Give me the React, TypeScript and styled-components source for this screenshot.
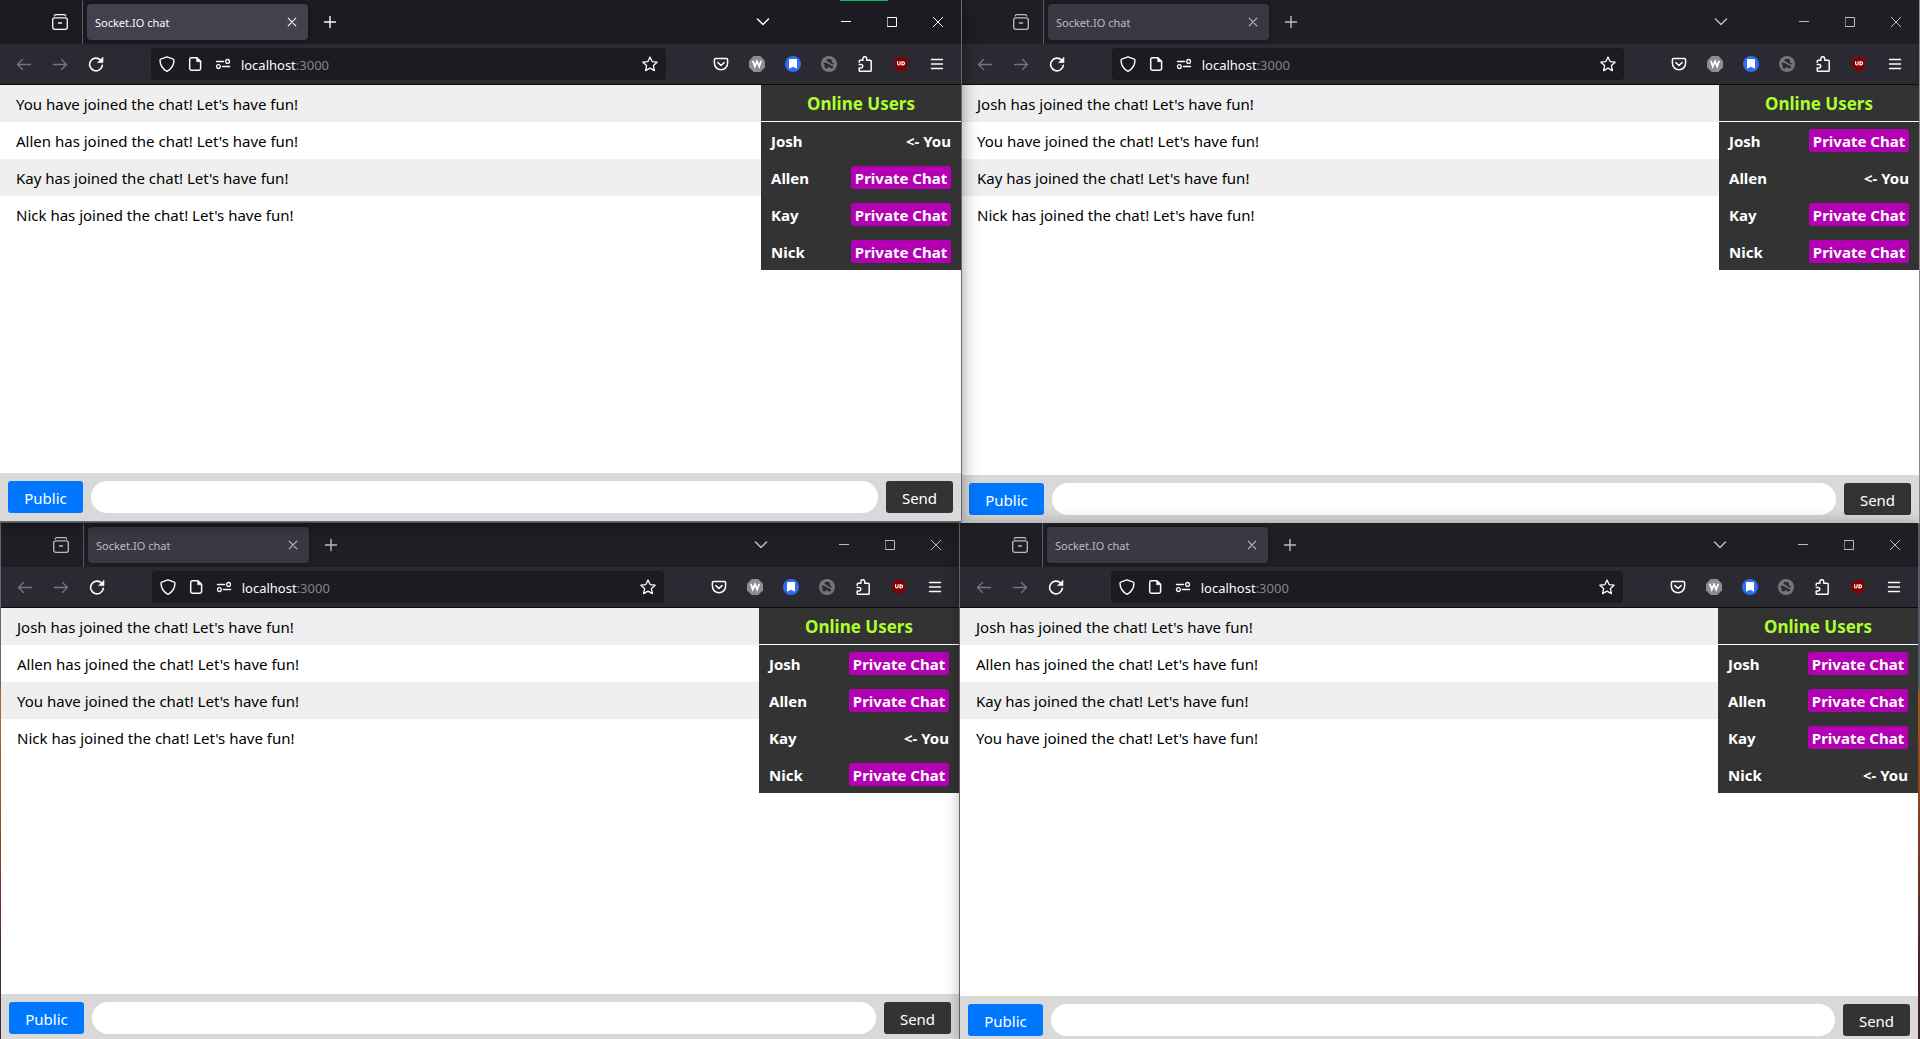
import React from "react";
import styled, { createGlobalStyle, css } from "styled-components";

const GlobalStyle = createGlobalStyle`
  *, *::before, *::after { box-sizing: border-box; }
  body { margin: 0; overflow: hidden; }
  button, input { font: inherit; color: inherit; border: 0; padding: 0; margin: 0; background: none; outline: none; }
  ul { list-style: none; margin: 0; padding: 0; }
  h2 { margin: 0; }
`;

type Slot = "topLeft" | "topRight" | "bottomLeft" | "bottomRight";

const Desktop = styled.main`
  position: relative;
  display: grid;
  grid-template-columns: 1fr 1fr;
  grid-template-rows: 523px 1fr;
  height: 100vh;
  overflow: hidden;
  background: linear-gradient(#5b6b7a 0, #5b6b7a 66%, #b8691c 67%, #a34a24 78%, #4a2a3c 92%, #44283a 100%);
  font-family: "Noto Sans", "Open Sans", sans-serif;
`;

const slots = {
  topLeft: css`
    margin: 0 -1px 2px 0;
    z-index: 4;
    box-shadow: 0 0 0 1px #6b6b6b, 0 2px 16px rgba(0, 0, 0, 0.45);
  `,
  topRight: css`
    margin: 0 1px 0 1px;
    z-index: 1;
    box-shadow: 0 0 0 1px #8a8a8a;
  `,
  bottomLeft: css`
    margin: 0 1px -3px 1px;
    z-index: 2;
    box-shadow: 0 -1px 0 0 #5b6b7a;
  `,
  bottomRight: css`
    margin: 0 2px -5px 0;
    z-index: 3;
    box-shadow: -1px 0 0 0 #6b6260, 0 0 14px rgba(0, 0, 0, 0.3);
  `,
};

const Window = styled.section<{ $slot: Slot }>`
  display: flex;
  flex-direction: column;
  min-width: 0;
  background: #fff;
  ${(p) => slots[p.$slot]}
`;

const TabStrip = styled.header<{ $active: boolean }>`
  display: flex;
  align-items: center;
  flex: none;
  height: 44px;
  background: ${(p) => (p.$active ? "#1c1b22" : "#1f1e25")};
  color: ${(p) => (p.$active ? "#fbfbfe" : "#bcbbc2")};
`;

const IconButton = styled.button<{ $width?: number; $dim?: boolean }>`
  display: flex;
  flex: none;
  align-items: center;
  justify-content: center;
  width: ${(p) => p.$width ?? 36}px;
  height: 32px;
  ${(p) => p.$dim && "color: #77767e;"}
`;

const ViewArea = styled.div`
  display: flex;
  align-items: center;
  justify-content: flex-end;
  width: 83px;
  height: 44px;
  padding-right: 4px;
  border-right: 1px solid #5b5b66;
`;

const Tab = styled.div<{ $active: boolean }>`
  display: flex;
  align-items: center;
  justify-content: space-between;
  width: 221px;
  height: 36px;
  margin: 0 4px;
  padding: 0 4px 0 8px;
  border-radius: 4px;
  background: ${(p) => (p.$active ? "#42414d" : "#3a3943")};
  box-shadow: 0 0 4px rgba(0, 0, 0, 0.4);
  font-size: 11px;
  line-height: 16px;
`;

const TabTitle = styled.span`
  padding-top: 2px;
`;

const WindowControls = styled.div`
  display: flex;
  margin-left: auto;
`;

const TabsMenu = styled.div`
  display: flex;
  padding-right: 42px;
`;

const Toolbar = styled.nav`
  display: flex;
  align-items: center;
  flex: none;
  height: 41px;
  padding: 0 6px;
  background: #2b2a33;
  border-bottom: 1px solid #0c0c0d;
  color: #fbfbfe;
`;

const Spring = styled.div`
  flex: 37 1 0;
`;

const AddressBar = styled.label`
  display: flex;
  align-items: center;
  flex: 513 1 0;
  min-width: 0;
  height: 32px;
  padding: 0 2px;
  border-radius: 4px;
  background: #1c1b22;
  font-size: 13px;
  line-height: 20px;
`;

const AddressText = styled.span`
  padding: 2px 0 0 4px;
`;

const Port = styled.span`
  color: #85848b;
`;

const AddressInput = styled.input`
  flex: 1;
  min-width: 0;
`;

const Page = styled.div`
  position: relative;
  display: flex;
  flex-direction: column;
  flex: 1;
  color: #000;
  font-size: 15px;
  line-height: 21px;
`;

const Body = styled.div`
  display: flex;
  align-items: flex-start;
  flex: 1;
`;

const Messages = styled.ul`
  flex: 1;
`;

const Message = styled.li`
  padding: 9px 16px 7px;
  &:nth-child(odd) {
    background: #efefef;
  }
`;

const Users = styled.aside`
  width: 200px;
  background: #333;
  color: #fff;
  font-weight: 700;
`;

const UsersTitle = styled.h2`
  height: 37px;
  border-bottom: 1px solid #fff;
  color: #adff2f;
  font-size: 17px;
  line-height: 37px;
  text-align: center;
`;

const UserRow = styled.li`
  display: flex;
  align-items: center;
  justify-content: space-between;
  height: 37px;
  padding: 0 10px;
  font-size: 15px;
  line-height: 23px;
`;

const UserLabel = styled.span`
  padding-top: 2px;
`;

const PrivateButton = styled.button`
  width: 100px;
  height: 23px;
  padding-top: 1px;
  border-radius: 3px;
  background: #b300b3;
  line-height: 22px;
`;

const Composer = styled.form`
  display: flex;
  gap: 8px;
  flex: none;
  height: 48px;
  padding: 8px;
  background: #d9d9d9;
`;

const ComposerButton = styled.button<{ $primary?: boolean }>`
  flex: none;
  width: ${(p) => (p.$primary ? 75 : 67)}px;
  padding-top: 2px;
  border-radius: 3px;
  background: ${(p) => (p.$primary ? "#0077ff" : "#333")};
  color: #fff;
  font-size: 15px;
`;

const MessageInput = styled.input`
  flex: 1;
  min-width: 0;
  padding: 0 16px;
  border-radius: 32px;
  background: #fff;
`;

const ShareMarker = styled.div`
  position: absolute;
  z-index: 5;
  top: 0;
  left: calc(50% - 120px);
  width: 48px;
  height: 1px;
  background: #00c561;
`;

const Svg = styled.svg`
  display: block;
  fill: none;
  stroke: currentColor;
  stroke-width: 1.3;
  stroke-linecap: round;
  stroke-linejoin: round;
`;

const Logo = styled.svg`
  display: block;
`;

const Glyph = ({ children, size = 16 }: { children: React.ReactNode; size?: number }) => (
  <Svg width={size} height={size} viewBox={`0 0 ${size} ${size}`} aria-hidden="true">
    {children}
  </Svg>
);

const FirefoxViewIcon = () => (
  <Glyph>
    <path d="M2.3 1.9c.2-.8.8-1.2 1.600-1.200h8.200c.8 0 1.400.4 1.600 1.200" />
    <rect x="0.7" y="3.9" width="14.6" height="11.4" rx="2" />
    <path strokeWidth="1.5" d="M6.5 9h3" />
  </Glyph>
);

const BackIcon = () => (
  <Glyph>
    <path d="M14.500 8.500H1.500M6.500 3.500l-5 5 5 5" />
  </Glyph>
);

const ForwardIcon = () => (
  <Glyph>
    <path d="M1.500 8.500h13M9.500 3.500l5 5-5 5" />
  </Glyph>
);

const ReloadIcon = () => (
  <Glyph>
    <path strokeWidth="1.6" d="M12.6 4A6.400 6.400 0 1 0 14.400 9.200" />
    <path fill="currentColor" strokeWidth="0.6" d="M15 1.4v5.200H9.800z" />
  </Glyph>
);

const ShieldIcon = () => (
  <Glyph>
    <path strokeWidth="1.4" d="M8 .8L14.3 3.2C14.9 3.4 15 3.8 15 4.4 14.8 9 12.6 13 8 15.3 3.4 13 1.2 9 1 4.4 1 3.8 1.1 3.4 1.7 3.2z" />
  </Glyph>
);

const PageIcon = () => (
  <Glyph>
    <path strokeWidth="1.5" d="M9.8 1.700H4.400a1.700 1.700 0 0 0-1.700 1.700v9.200a1.700 1.700 0 0 0 1.700 1.700h7.500a1.700 1.700 0 0 0 1.700-1.700V5.400z" />
    <path fill="currentColor" strokeWidth="0.6" d="M9.6 1.700v4h4z" />
  </Glyph>
);

const PermissionsIcon = () => (
  <Glyph>
    <path strokeWidth="1.5" d="M1.5 5.400h7M7.500 10.600h7" />
    <circle cx="12.6" cy="5.4" r="1.9" />
    <circle cx="3.4" cy="10.6" r="1.9" />
  </Glyph>
);

const StarIcon = () => (
  <Glyph>
    <path d="M8 1l2.100 4.600 5 .6-3.700 3.400 1 5L8 12.100l-4.400 2.500 1-5L.9 6.200l5-.6z" />
  </Glyph>
);

const PocketIcon = () => (
  <Glyph>
    <path strokeWidth="1.5" d="M2.6 2.600h10.800c.7 0 1.200.5 1.200 1.200v3.400a6.600 6.600 0 0 1-13.200 0V3.800c0-.7.5-1.200 1.200-1.200z" />
    <path strokeWidth="1.5" d="M4.9 6.600L8 9.500l3.100-2.900" />
  </Glyph>
);

const WIcon = () => (
  <Logo width="16" height="16" viewBox="0 0 16 16" aria-hidden="true">
    <path fill="#8d8d8d" d="M4.700 0h6.600L16 4.700v6.600L11.300 16H4.700L0 11.300V4.700z" />
    <path fill="none" stroke="#fff" strokeWidth="1.8" d="M3.800 4.800l2 5.800L8 5.400l2.200 5.200 2-5.800" />
  </Logo>
);

const BookmarkIcon = () => (
  <Logo width="16" height="16" viewBox="0 0 16 16" aria-hidden="true">
    <circle cx="8" cy="8" r="8" fill="#2f6df6" />
    <path fill="#fff" d="M5 3h6c.6 0 1 .4 1 1v8.800L8 10.800 4 12.800V4c0-.6.4-1 1-1z" />
  </Logo>
);

const BlockerIcon = () => (
  <Logo width="16" height="16" viewBox="0 0 16 16" aria-hidden="true">
    <circle cx="8" cy="8" r="8" fill="#75757a" />
    <path fill="#2b2a33" d="M5.400 4.800C5.600 3.500 6.200 2.800 7 2.800c.5 0 .7.3 1.100.3s.7-.3 1.200-.3c.9 0 1.500.9 1.700 2.500l.2 1.500c1 .2 1.800.5 2.300.9-.5.400-1.200.6-2 .700z" />
    <path fill="#2b2a33" d="M2.300 7.300c.5-.5 1.200-.7 2.200-.8l7.800 4c-.3 1.400-1 2-2 2-1.100 0-1.800-.7-2-1.700h-.7c-.2 1-.9 1.700-2 1.700-1.200 0-2.100-.9-2.100-2.100 0-.5.1-.9.3-1.300-.7-.4-1.300-1-1.500-1.800z" />
  </Logo>
);

const ExtensionsIcon = () => (
  <Glyph>
    <path
      strokeWidth="1.500"
      d="M2.200 6.200V5.300c0-.6.400-1 1-1h2.700V2.600a1.900 1.900 0 0 1 3.800 0v1.700h3.500c.6 0 1 .4 1 1v9c0 .6-.4 1-1 1h-10c-.6 0-1-.4-1-1v-2.400h1.900a1.700 1.700 0 0 0 0-3.400H2.200"
    />
  </Glyph>
);

const UblockIcon = () => (
  <Logo width="16" height="16" viewBox="0 0 16 16" aria-hidden="true">
    <path fill="#800000" stroke="#5e1a1e" strokeWidth="0.600" d="M8 .4c2 1.300 4.200 1.900 6.600 1.900v5.400c0 3.700-2.400 6-6.600 8-4.200-2-6.600-4.300-6.600-8V2.300C3.800 2.300 6 1.700 8 .4z" />
    <path fill="none" stroke="#fff" strokeWidth="1.200" d="M4.600 5.200v2.600c0 1.600 2.500 1.600 2.500 0V5.200M9 5.800v3h.8c2.400 0 2.400-3 0-3z" />
  </Logo>
);

const MenuIcon = () => (
  <Glyph>
    <path strokeWidth="1.400" d="M2.500 3.500h11M2.500 8h11M2.500 12.500h11" />
  </Glyph>
);

const ChevronIcon = () => (
  <Glyph>
    <path strokeWidth="1.500" d="M2.500 5L8 10.500 13.500 5" />
  </Glyph>
);

const CloseTabIcon = () => (
  <Glyph>
    <path strokeWidth="1.100" d="M4.200 4.200l7.600 7.600M11.800 4.200l-7.600 7.600" />
  </Glyph>
);

const PlusIcon = () => (
  <Glyph>
    <path strokeWidth="1.400" d="M8 2.500v11M2.500 8h11" />
  </Glyph>
);

const MinimizeIcon = () => (
  <Glyph size={10}>
    <path strokeWidth="1" strokeLinecap="butt" d="M0 4.500h10" />
  </Glyph>
);

const MaximizeIcon = () => (
  <Glyph size={10}>
    <path strokeWidth="1" strokeLinejoin="miter" d="M.5 .5h9v9h-9z" />
  </Glyph>
);

const CloseIcon = () => (
  <Glyph size={10}>
    <path strokeWidth="1" d="M.3 .3l9.400 9.400M9.700 .3L.3 9.700" />
  </Glyph>
);

const users = ["Josh", "Allen", "Kay", "Nick"];

const extensions = [
  { label: "Save to Pocket", icon: <PocketIcon /> },
  { label: "Wappalyzer", icon: <WIcon /> },
  { label: "Bookmarks", icon: <BookmarkIcon /> },
  { label: "Privacy blocker", icon: <BlockerIcon /> },
  { label: "Extensions", icon: <ExtensionsIcon /> },
  { label: "uBlock", icon: <UblockIcon /> },
  { label: "Menu", icon: <MenuIcon /> },
];

const ChatWindow = ({ me, slot, active = false }: { me: string; slot: Slot; active?: boolean }) => (
  <Window $slot={slot} aria-label={`Chat window of ${me}`}>
    <TabStrip $active={active}>
      <ViewArea>
        <IconButton aria-label="View"><FirefoxViewIcon /></IconButton>
      </ViewArea>
      <Tab $active={active}>
        <TabTitle>Socket.IO chat</TabTitle>
        <IconButton $width={24} aria-label="Close tab"><CloseTabIcon /></IconButton>
      </Tab>
      <IconButton aria-label="New tab"><PlusIcon /></IconButton>
      <WindowControls>
        <TabsMenu>
          <IconButton aria-label="List all tabs"><ChevronIcon /></IconButton>
        </TabsMenu>
        <IconButton $width={46} aria-label="Minimize"><MinimizeIcon /></IconButton>
        <IconButton $width={46} aria-label="Maximize"><MaximizeIcon /></IconButton>
        <IconButton $width={46} aria-label="Close"><CloseIcon /></IconButton>
      </WindowControls>
    </TabStrip>
    <Toolbar>
      <IconButton $dim aria-label="Back"><BackIcon /></IconButton>
      <IconButton $dim aria-label="Forward"><ForwardIcon /></IconButton>
      <IconButton aria-label="Reload"><ReloadIcon /></IconButton>
      <Spring />
      <AddressBar>
        <IconButton as="span" $width={28}><ShieldIcon /></IconButton>
        <IconButton as="span" $width={28}><PageIcon /></IconButton>
        <IconButton as="span" $width={28}><PermissionsIcon /></IconButton>
        <AddressText>localhost<Port>:3000</Port></AddressText>
        <AddressInput type="text" aria-label="Address" />
        <IconButton as="span" $width={28}><StarIcon /></IconButton>
      </AddressBar>
      <Spring />
      {extensions.map((e) => (
        <IconButton key={e.label} aria-label={e.label}>{e.icon}</IconButton>
      ))}
    </Toolbar>
    <Page>
      <Body>
        <Messages>
          {users.map((u) => (
            <Message key={u}>
              {u === me ? "You have" : `${u} has`} joined the chat! Let's have fun!
            </Message>
          ))}
        </Messages>
        <Users>
          <UsersTitle>Online Users</UsersTitle>
          <ul>
            {users.map((u) => (
              <UserRow key={u}>
                <UserLabel>{u}</UserLabel>
                {u === me ? <UserLabel>{"<- You"}</UserLabel> : <PrivateButton type="button">Private Chat</PrivateButton>}
              </UserRow>
            ))}
          </ul>
        </Users>
      </Body>
      <Composer onSubmit={(e) => e.preventDefault()}>
        <ComposerButton type="button" $primary>Public</ComposerButton>
        <MessageInput type="text" aria-label="Message" />
        <ComposerButton type="submit">Send</ComposerButton>
      </Composer>
    </Page>
  </Window>
);

export default function App() {
  return (
    <>
      <GlobalStyle />
      <Desktop>
        <ShareMarker />
        <ChatWindow me="Josh" slot="topLeft" active />
        <ChatWindow me="Allen" slot="topRight" />
        <ChatWindow me="Kay" slot="bottomLeft" />
        <ChatWindow me="Nick" slot="bottomRight" />
      </Desktop>
    </>
  );
}
